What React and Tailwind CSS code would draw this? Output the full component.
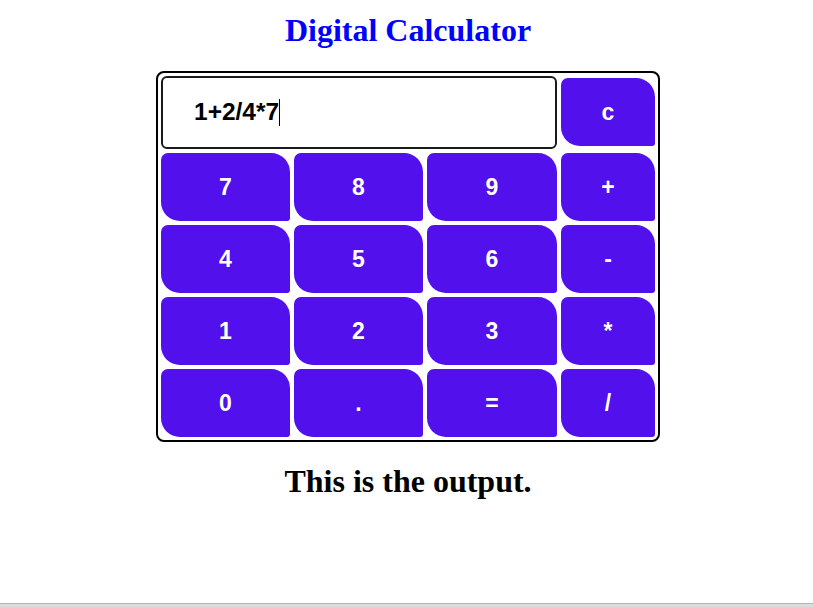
import React from "react";

const keys = [
  ["7", "8", "9", "+"],
  ["4", "5", "6", "-"],
  ["1", "2", "3", "*"],
  ["0", ".", "=", "/"],
];

const Key = ({ label }) => (
  <button className="w-full h-[68px] bg-[#5110ec] text-white font-bold text-[23px] rounded-[7px_19px_3px_19px] flex items-center justify-center">
    {label}
  </button>
);

const App = () => {
  return (
    <div className="min-h-screen flex flex-col bg-white font-['Liberation_Sans',Arial,sans-serif]">
      <div className="pl-[3px] flex flex-col">
        <h1 className="pt-[12px] text-center text-[32px] leading-[37px] font-bold text-[#0000ff] font-['Liberation_Serif','Times_New_Roman',serif]">
          Digital Calculator
        </h1>

        <div className="mx-auto mt-[22px] border-2 border-black rounded-[8px] p-[3px]">
          <div className="grid grid-cols-[129px_129px_130px_94px] gap-[4px]">
            <div className="col-span-3 h-[73px] border-2 border-[#1a1a1a] rounded-[6px] flex items-center pl-[31px]">
              <span className="text-[24.5px] font-bold text-black">1+2/4*7</span>
              <span className="w-px h-[27px] bg-black"></span>
            </div>
            <div className="flex items-center -mt-[1px]">
              <Key label="c" />
            </div>
            {keys.flat().map((k) => (
              <Key key={k} label={k} />
            ))}
          </div>
        </div>

        <h2 className="mt-[21px] text-center text-[32px] leading-[37px] font-bold text-black font-['Liberation_Serif','Times_New_Roman',serif]">
          This is the output.
        </h2>
      </div>

      <div className="flex-1"></div>
      <div className="h-[4px] border-t border-[#b4b4b4] bg-[#dcdcdc]"></div>
    </div>
  );
};

export default App;
